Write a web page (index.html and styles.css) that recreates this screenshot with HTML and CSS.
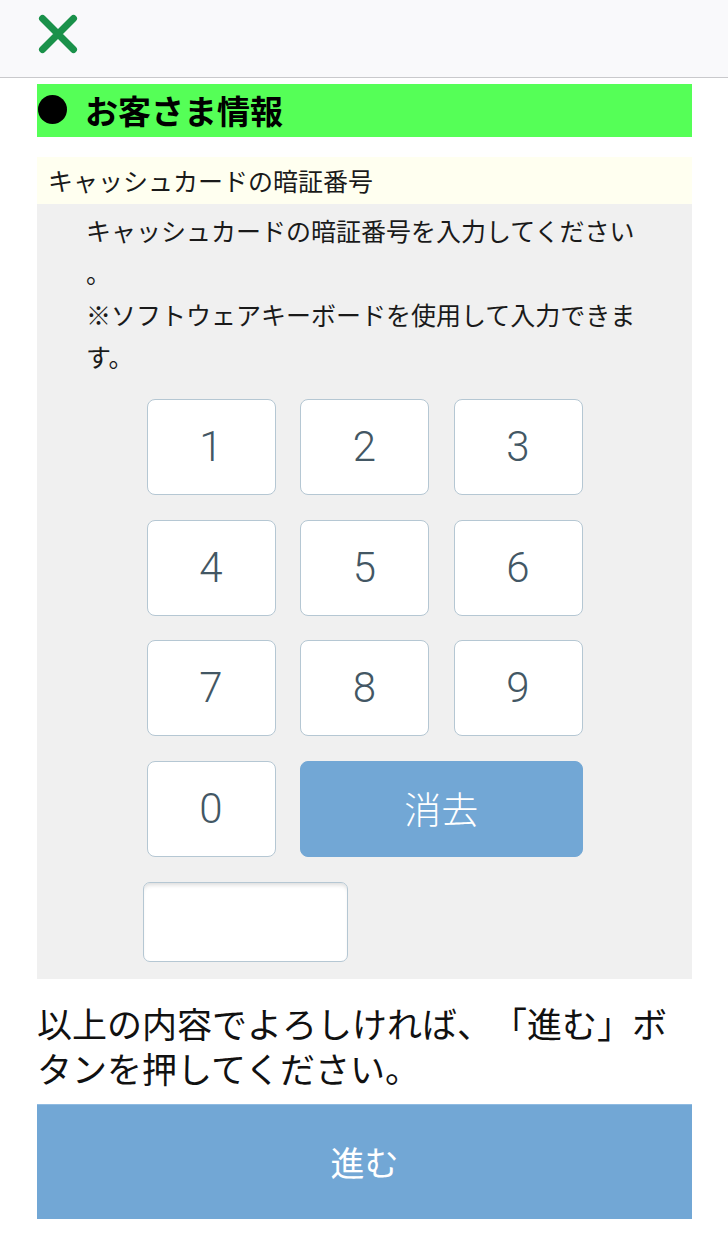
FILE: index.html
```html
<!DOCTYPE html>
<html lang="ja">
<head>
<meta charset="utf-8">
<title>お客さま情報</title>
<link rel="stylesheet" href="styles.css">
</head>
<body>
<header class="topbar">
  <button class="close" type="button" aria-label="閉じる">
    <svg width="40" height="40" viewBox="0 0 40 40"><path d="M4.5 4.5 L35.5 35.5 M35.5 4.5 L4.5 35.5" stroke="#1a914a" stroke-width="7" stroke-linecap="round" fill="none"/></svg>
  </button>
</header>
<main class="content">
  <h1 class="section-title"><span class="dot"></span><span class="title-text">お客さま情報</span></h1>
  <div class="field-label">キャッシュカードの暗証番号</div>
  <div class="field-body">
    <p class="instructions">キャッシュカードの暗証番号を入力してください。<br>※ソフトウェアキーボードを使用して入力できます。</p>
    <div class="keypad">
      <button class="key" type="button">1</button>
      <button class="key" type="button">2</button>
      <button class="key" type="button">3</button>
      <button class="key" type="button">4</button>
      <button class="key" type="button">5</button>
      <button class="key" type="button">6</button>
      <button class="key" type="button">7</button>
      <button class="key" type="button">8</button>
      <button class="key" type="button">9</button>
      <button class="key" type="button">0</button>
      <button class="key clear" type="button">消去</button>
    </div>
    <div class="pin-row"><input class="pin-input" type="password" aria-label="暗証番号"></div>
  </div>
  <p class="confirm">以上の内容でよろしければ、「進む」ボタンを押してください。</p>
  <button class="next" type="button">進む</button>
</main>
</body>
</html>
```
FILE: styles.css
```css
* { box-sizing: border-box; }
html, body { margin: 0; padding: 0; background: #fff; }
body {
  font-family: "Noto Sans CJK JP", "Noto Sans", sans-serif;
  color: #111;
  width: 728px;
  text-spacing-trim: space-all;
}
.topbar {
  height: 78px;
  background: #f9f9fb;
  border-bottom: 1px solid #c9c9cc;
  padding: 14px 0 0 38px;
}
.close {
  display: block;
  width: 40px;
  height: 40px;
  padding: 0;
  border: 0;
  background: transparent;
}
.close svg { display: block; }
.content {
  margin: 0 36px 0 37px;
}
.section-title {
  margin: 6px 0 0;
  height: 53px;
  background: #55ff57;
  display: flex;
  align-items: center;
  font-size: 33px;
  font-weight: 700;
  color: #000;
}
.dot {
  width: 29px;
  height: 29px;
  border-radius: 50%;
  background: #000;
  margin-left: 1px;
  margin-top: -2px;
}
.title-text {
  margin-left: 18px;
  line-height: 53px;
}
.field-label {
  margin-top: 20px;
  height: 47px;
  line-height: 47px;
  background: #fffff0;
  padding-left: 11px;
  font-size: 25px;
  color: #1a1a1a;
}
.field-body {
  background: #f0f0f0;
  padding: 5px 49px 17px;
}
.instructions {
  margin: 0;
  font-size: 25px;
  line-height: 42px;
  color: #1a1a1a;
  line-break: anywhere;
}
.keypad {
  margin: 22px auto 0;
  display: grid;
  grid-template-columns: repeat(3, 129px);
  grid-auto-rows: 96px;
  column-gap: 24.5px;
  row-gap: 24.5px;
  justify-content: center;
}
.key {
  background: #fff;
  border: 1.5px solid #b5c7d3;
  border-radius: 8px;
  font-family: Roboto, "Liberation Sans", sans-serif;
  font-weight: 300;
  font-size: 42px;
  color: #435764;
  padding: 0;
  line-height: 1;
}
.key.clear {
  grid-column: span 2;
  background: #72a7d5;
  border-color: #72a7d5;
  color: #fff;
  font-family: "Noto Sans CJK JP", "Noto Sans", sans-serif;
  font-weight: 300;
  font-size: 37px;
}
.pin-row {
  width: 436px;
  margin: 25px auto 0;
}
.pin-input {
  display: block;
  margin-left: -4px;
  width: 205px;
  height: 80px;
  background: #fff;
  border: 1.5px solid #b5c7d3;
  border-radius: 7px;
  box-shadow: inset 0 4px 4px -2px rgba(0, 0, 0, 0.14);
  outline: none;
}
.confirm {
  margin: 21px 0 0;
  font-size: 35px;
  line-height: 45px;
  color: #111;
  line-break: anywhere;
}
.next {
  display: block;
  width: 100%;
  height: 115px;
  margin-top: 14px;
  background: #72a7d5;
  border: 0;
  border-top: 1px solid #8fbbe2;
  color: #fff;
  font-family: "Noto Sans CJK JP", "Noto Sans", sans-serif;
  font-size: 34px;
  font-weight: 400;
  padding: 0;
}
```
